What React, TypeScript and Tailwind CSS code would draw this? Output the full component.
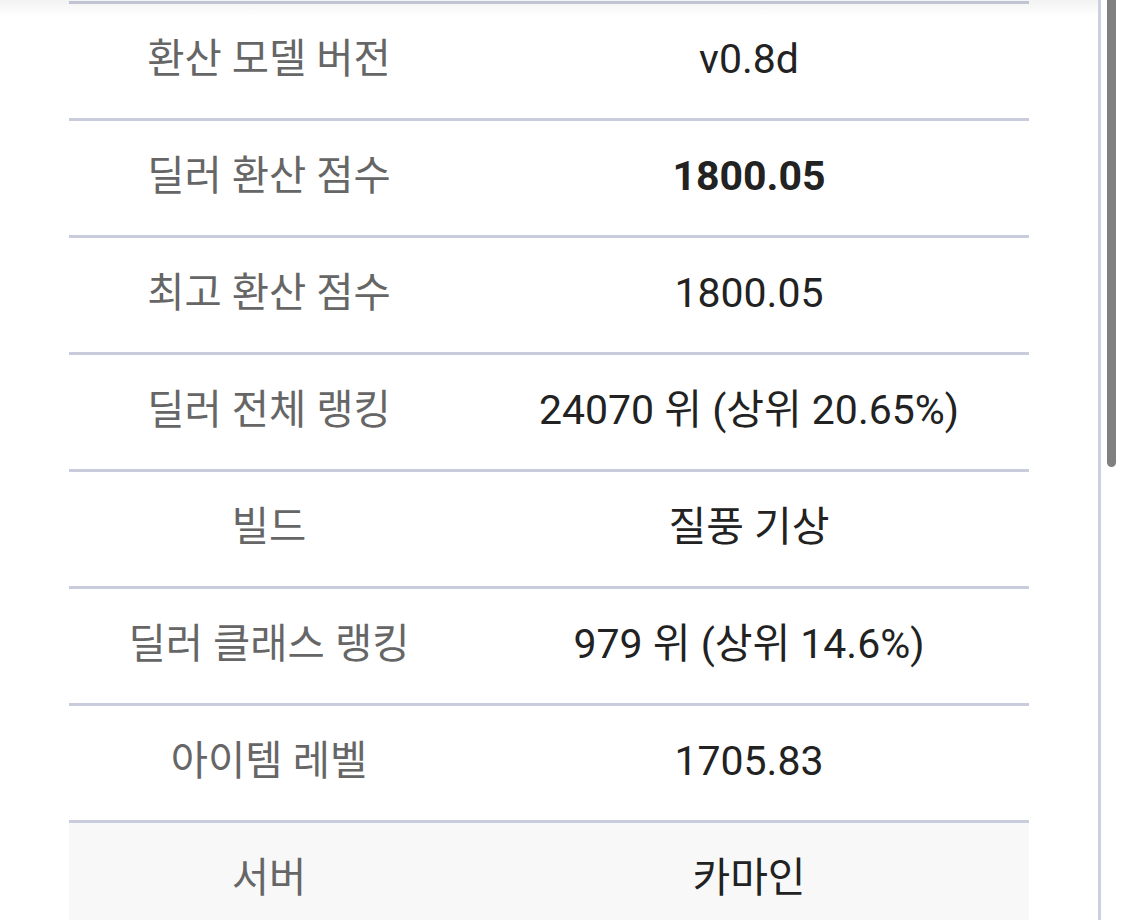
const rows = [
  { label: "환산 모델 버전", value: "v0.8d" },
  { label: "딜러 환산 점수", value: "1800.05", bold: true },
  { label: "최고 환산 점수", value: "1800.05" },
  { label: "딜러 전체 랭킹", value: "24070 위 (상위 20.65%)" },
  { label: "빌드", value: "질풍 기상" },
  { label: "딜러 클래스 랭킹", value: "979 위 (상위 14.6%)" },
  { label: "아이템 레벨", value: "1705.83" },
  { label: "서버", value: "카마인", shaded: true },
];

export default function App() {
  return (
    <div
      className="relative flex h-[920px] w-[1125px] overflow-hidden bg-white"
      style={{ fontFamily: 'Roboto, "Noto Sans CJK KR", sans-serif' }}
    >
      {/* shadow from the sticky header above */}
      <div className="pointer-events-none absolute left-0 right-[27px] top-0 h-4 bg-gradient-to-b from-black/[0.05] to-transparent" />

      <div className="flex w-[1098px] justify-center pt-px">
        <div className="w-[960px]">
          {rows.map((row) => (
            <div
              key={row.label}
              className={
                "flex h-[117px] items-center border-t-[3.5px] border-[#c8ccdc] pb-[3px] " +
                (row.shaded ? "bg-[#f8f8f9]" : "bg-white")
              }
            >
              <div className="w-[400px] text-center text-[40.5px] text-[#666666]">
                {row.label}
              </div>
              <div
                className={
                  "flex-1 text-center text-[41px] text-[#222222] " +
                  (row.bold ? "font-bold" : "")
                }
              >
                {row.value}
              </div>
            </div>
          ))}
        </div>
      </div>

      <div className="w-[3px] bg-[#cbd0e0]" />
      <div className="flex-1 bg-white pl-[6px]">
        <div className="h-[467px] w-[9px] rounded-b-full bg-[#808080]" />
      </div>
    </div>
  );
}
